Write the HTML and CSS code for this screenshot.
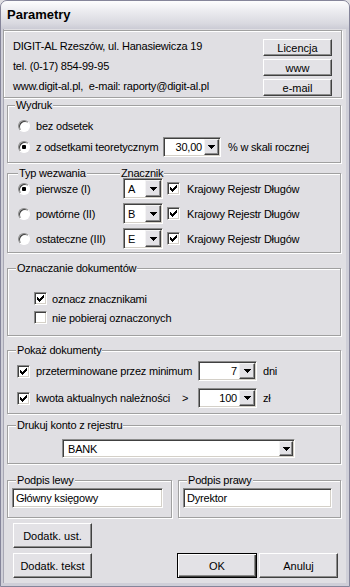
FILE: index.html
```html
<!DOCTYPE html>
<html lang="pl">
	<head>
		<meta charset="UTF-8" />
		<meta name="viewport" content="width=device-width, initial-scale=1.0" />
		<title>Parametry</title>
		<link rel="stylesheet" href="styles.css">
	</head>
	<body>
		<div class="window">
			<div class="titlebar">Parametry</div>
			<div class="client">
				<!-- company info + links -->
				<div class="info etched">
					<div class="info-text">
						<div>DIGIT-AL Rzeszów, ul. Hanasiewicza 19</div>
						<div>tel. (0-17) 854-99-95</div>
						<div>www.digit-al.pl,&nbsp; e-mail: raporty@digit-al.pl</div>
					</div>
					<div class="info-buttons">
						<button class="btn">Licencja</button>
						<button class="btn">www</button>
						<button class="btn">e-mail</button>
					</div>
				</div>

				<div class="group etched wydruk">
					<div class="legend"><span>Wydruk</span></div>
					<div class="row">
						<span class="radio"></span>
						<span>bez odsetek</span>
					</div>
					<div class="row">
						<span class="radio checked"></span>
						<span class="label-odsetki">z odsetkami teoretycznym</span>
						<div class="combo combo-odsetki">
							<span class="combo-value num">30,00</span>
							<span class="combo-btn"><svg width="7" height="4" viewBox="0 0 7 4"><path d="M0 0H7V1H6V2H5V3H4V4H3V3H2V2H1V1H0Z" /></svg></span>
						</div>
						<span class="unit">% w skali rocznej</span>
					</div>
				</div>

				<div class="group etched typ">
					<div class="legend"><span>Typ wezwania</span><span>Znacznik</span></div>
					<div class="row">
						<span class="radio checked"></span>
						<span class="label-typ">pierwsze (I)</span>
						<div class="combo combo-znacznik">
							<span class="combo-value">A</span>
							<span class="combo-btn"><svg width="7" height="4" viewBox="0 0 7 4"><path d="M0 0H7V1H6V2H5V3H4V4H3V3H2V2H1V1H0Z" /></svg></span>
						</div>
						<span class="check checked"><svg width="7" height="7" viewBox="0 0 7 7"><path d="M0 2H1V3H2V4H3V3H4V2H5V1H6V0H7V3H6V4H5V5H4V6H3V7H2V6H1V5H0Z" /></svg></span>
						<span class="krd">Krajowy Rejestr Długów</span>
					</div>
					<div class="row">
						<span class="radio"></span>
						<span class="label-typ">powtórne (II)</span>
						<div class="combo combo-znacznik">
							<span class="combo-value">B</span>
							<span class="combo-btn"><svg width="7" height="4" viewBox="0 0 7 4"><path d="M0 0H7V1H6V2H5V3H4V4H3V3H2V2H1V1H0Z" /></svg></span>
						</div>
						<span class="check checked"><svg width="7" height="7" viewBox="0 0 7 7"><path d="M0 2H1V3H2V4H3V3H4V2H5V1H6V0H7V3H6V4H5V5H4V6H3V7H2V6H1V5H0Z" /></svg></span>
						<span class="krd">Krajowy Rejestr Długów</span>
					</div>
					<div class="row">
						<span class="radio"></span>
						<span class="label-typ">ostateczne (III)</span>
						<div class="combo combo-znacznik">
							<span class="combo-value">E</span>
							<span class="combo-btn"><svg width="7" height="4" viewBox="0 0 7 4"><path d="M0 0H7V1H6V2H5V3H4V4H3V3H2V2H1V1H0Z" /></svg></span>
						</div>
						<span class="check checked"><svg width="7" height="7" viewBox="0 0 7 7"><path d="M0 2H1V3H2V4H3V3H4V2H5V1H6V0H7V3H6V4H5V5H4V6H3V7H2V6H1V5H0Z" /></svg></span>
						<span class="krd">Krajowy Rejestr Długów</span>
					</div>
				</div>

				<div class="group etched oznacz">
					<div class="legend"><span>Oznaczanie dokumentów</span></div>
					<div class="row">
						<span class="check checked"><svg width="7" height="7" viewBox="0 0 7 7"><path d="M0 2H1V3H2V4H3V3H4V2H5V1H6V0H7V3H6V4H5V5H4V6H3V7H2V6H1V5H0Z" /></svg></span>
						<span>oznacz znacznikami</span>
					</div>
					<div class="row">
						<span class="check"></span>
						<span>nie pobieraj oznaczonych</span>
					</div>
				</div>

				<div class="group etched pokaz">
					<div class="legend"><span>Pokaż dokumenty</span></div>
					<div class="row">
						<span class="check checked"><svg width="7" height="7" viewBox="0 0 7 7"><path d="M0 2H1V3H2V4H3V3H4V2H5V1H6V0H7V3H6V4H5V5H4V6H3V7H2V6H1V5H0Z" /></svg></span>
						<span class="label-min">przeterminowane przez minimum</span>
						<div class="combo combo-pokaz">
							<span class="combo-value num">7</span>
							<span class="combo-btn"><svg width="7" height="4" viewBox="0 0 7 4"><path d="M0 0H7V1H6V2H5V3H4V4H3V3H2V2H1V1H0Z" /></svg></span>
						</div>
						<span class="unit">dni</span>
					</div>
					<div class="row">
						<span class="check checked"><svg width="7" height="7" viewBox="0 0 7 7"><path d="M0 2H1V3H2V4H3V3H4V2H5V1H6V0H7V3H6V4H5V5H4V6H3V7H2V6H1V5H0Z" /></svg></span>
						<span class="label-kwota">kwota aktualnych należności</span>
						<span class="gt">&gt;</span>
						<div class="combo combo-pokaz">
							<span class="combo-value num">100</span>
							<span class="combo-btn"><svg width="7" height="4" viewBox="0 0 7 4"><path d="M0 0H7V1H6V2H5V3H4V4H3V3H2V2H1V1H0Z" /></svg></span>
						</div>
						<span class="unit">zł</span>
					</div>
				</div>

				<div class="group etched drukuj">
					<div class="legend"><span>Drukuj konto z rejestru</span></div>
					<div class="combo combo-konto">
						<span class="combo-value">BANK</span>
						<span class="combo-btn"><svg width="7" height="4" viewBox="0 0 7 4"><path d="M0 0H7V1H6V2H5V3H4V4H3V3H2V2H1V1H0Z" /></svg></span>
					</div>
				</div>

				<div class="podpis-row">
					<div class="group etched podpis podpis-left">
						<div class="legend"><span>Podpis lewy</span></div>
						<div class="field">Główny księgowy</div>
					</div>
					<div class="group etched podpis podpis-right">
						<div class="legend"><span>Podpis prawy</span></div>
						<div class="field">Dyrektor</div>
					</div>
				</div>

				<div class="bottom">
					<div class="bottom-left">
						<button class="btn">Dodatk. ust.</button>
						<button class="btn">Dodatk. tekst</button>
					</div>
					<div class="bottom-right">
						<button class="btn default">OK</button>
						<button class="btn">Anuluj</button>
					</div>
				</div>
			</div>
		</div>
	</body>
</html>
```

FILE: styles.css
```css
body {
	margin: 0;
	background: #e0dfe3;
	font-family: "Liberation Sans", Arial, sans-serif;
	font-size: 11px;
	letter-spacing: -0.2px;
	color: #000;
}
.window {
	box-sizing: border-box;
	width: 350px;
	height: 587px;
	border: 1px solid #85859a;
	border-radius: 7px 7px 0 0;
	background: #cfcfd8;
	display: flex;
	flex-direction: column;
	overflow: hidden;
}
.titlebar {
	height: 28px;
	line-height: 28px;
	padding-left: 6px;
	font-size: 13px;
	font-weight: bold;
	letter-spacing: 0;
	background: linear-gradient(#fdfdfe, #ececf0 35%, #d9d9e0 80%, #cbcbd5);
}
.client {
	flex: 1;
	margin: 0 3px 3px 2px;
	background: #e0dfe3;
	box-shadow: inset 1px 0 #a8a8b4;
	white-space: nowrap;
}

/* etched frame like a windows group box */
.etched {
	border: 1px solid #a0a0a0;
	box-shadow: inset 1px 1px #fff, 1px 1px #fff;
}

.info {
	box-sizing: border-box;
	height: 68px;
	margin: 1px 4px 0 0;
	padding: 5px 9px 0;
	display: flex;
	justify-content: space-between;
}
.info-text div {
	line-height: 20px;
}
.info-buttons {
	display: flex;
	flex-direction: column;
	gap: 3px;
	margin-top: 3px;
}
.info-buttons .btn {
	width: 69px;
	height: 17px;
}

.btn {
	font: inherit;
	color: #000;
	background: #e3e2e6;
	border: 1px solid;
	border-color: #fff #404040 #404040 #fff;
	box-shadow: inset -1px -1px #8c8c8c;
	padding: 0;
}
.btn.default {
	border-color: #000;
	box-shadow: inset 1px 1px #fff, inset -1px -1px #404040, inset -2px -2px #8c8c8c;
}

.group {
	margin: 0 5px 0 4px;
}
.legend {
	display: flex;
	height: 13px;
	line-height: 13px;
	margin: -7px 0 0 8px;
}
.legend span {
	background: #e0dfe3;
	padding: 0 1px;
}
.row {
	display: flex;
	align-items: center;
}

.radio {
	flex: none;
	box-sizing: border-box;
	width: 12px;
	height: 12px;
	margin-right: 6px;
	border-radius: 50%;
	border: 1px solid;
	border-color: #8c8c8c #fff #fff #8c8c8c;
	box-shadow: inset 1px 1px #404040;
	background: #fff;
	display: flex;
	align-items: center;
	justify-content: center;
}
.radio.checked::after {
	content: "";
	width: 4px;
	height: 4px;
	border-radius: 1px;
	background: #000;
}

.check {
	flex: none;
	box-sizing: border-box;
	width: 13px;
	height: 13px;
	border: 1px solid;
	border-color: #8c8c8c #fff #fff #8c8c8c;
	box-shadow: inset 1px 1px #404040, inset -1px -1px #d4d0c8;
	background: #fff;
	display: flex;
	align-items: center;
	justify-content: center;
}
.check svg {
	fill: #000;
}

.combo {
	flex: none;
	box-sizing: border-box;
	display: flex;
	padding: 1px;
	border: 1px solid;
	border-color: #8c8c8c #fff #fff #8c8c8c;
	box-shadow: inset 1px 1px #404040, inset -1px -1px #d4d0c8;
	background: #fff;
}
.combo-value {
	flex: 1;
	display: flex;
	align-items: center;
	padding: 0 2px;
}
.combo-value.num {
	justify-content: flex-end;
}
.combo-btn {
	box-sizing: border-box;
	flex: none;
	width: 16px;
	display: flex;
	align-items: center;
	justify-content: center;
	background: #e3e2e6;
	border: 1px solid;
	border-color: #f4f4f4 #404040 #404040 #f4f4f4;
	box-shadow: inset -1px -1px #8c8c8c;
}
.combo-btn svg {
	fill: #000;
}

/* Wydruk */
.wydruk {
	margin-top: 7px;
	padding-bottom: 5px;
}
.wydruk .legend {
	margin-left: 7px;
}
.wydruk .row {
	height: 20px;
	padding-left: 10px;
	margin-top: 1px;
}
.wydruk .legend + .row {
	margin-top: 4px;
}
.label-odsetki {
	width: 127px;
	flex: none;
}
.combo-odsetki {
	width: 58px;
	height: 20px;
}
.combo-odsetki .combo-btn {
	width: 15px;
}
.unit {
	margin-left: 6px;
}
.wydruk .unit {
	margin-left: 7px;
}

/* Typ wezwania */
.typ {
	margin-top: 10px;
	padding-bottom: 3px;
}
.typ .legend {
	display: grid;
	grid-template-columns: 102px auto;
	margin: -7px 0 -2px 10px;
}
.typ .legend span {
	justify-self: start;
}
.typ .row {
	height: 21px;
	padding-left: 10px;
	margin-top: 4px;
}
.typ .legend + .row {
	margin-top: 0;
}
.label-typ {
	width: 87px;
	flex: none;
}
.combo-znacznik {
	width: 40px;
	height: 21px;
}
.combo-znacznik .combo-value {
	padding-left: 3px;
}
.typ .check {
	margin-left: 4px;
}
.krd {
	margin-left: 7px;
}

/* Oznaczanie dokumentow */
.oznacz {
	margin-top: 15px;
	padding-bottom: 8px;
}
.oznacz .row {
	height: 19px;
	padding-left: 26px;
}
.oznacz .legend + .row {
	margin-top: 14px;
}
.oznacz .check {
	margin-right: 5px;
}

/* Pokaz dokumenty */
.pokaz {
	margin-top: 14px;
	padding-bottom: 5px;
}
.pokaz .row {
	height: 20px;
	padding-left: 9px;
	margin-top: 7px;
}
.pokaz .legend + .row {
	margin-top: 4px;
}
.pokaz .check {
	margin-right: 6px;
}
.label-min {
	width: 162px;
	flex: none;
}
.label-kwota {
	width: 146px;
	flex: none;
}
.gt {
	width: 16px;
	flex: none;
}
.combo-pokaz {
	width: 59px;
	height: 20px;
}

/* Drukuj konto */
.drukuj {
	margin-top: 11px;
	padding-bottom: 5px;
}
.combo-konto {
	width: 233px;
	height: 19px;
	margin: 7px 0 0 54px;
}
.combo-konto .combo-value {
	padding-left: 4px;
}
.combo-konto .combo-btn {
	width: 14px;
}

/* Podpisy */
.podpis-row {
	display: flex;
	gap: 6px;
	margin: 16px 5px 0 4px;
}
.podpis-row .group {
	margin: 0;
	padding-bottom: 9px;
}
.podpis-left {
	box-sizing: border-box;
	width: 165px;
}
.podpis-right {
	flex: 1;
}
.field {
	box-sizing: border-box;
	height: 20px;
	margin: 1px 0 0 4px;
	padding: 0 3px;
	line-height: 18px;
	border: 1px solid;
	border-color: #8c8c8c #fff #fff #8c8c8c;
	box-shadow: inset 1px 1px #404040, inset -1px -1px #d4d0c8;
	background: #fff;
}
.podpis-left .field {
	width: 151px;
}
.podpis-right .field {
	width: 149px;
}

/* Buttons */
.bottom {
	display: flex;
	align-items: flex-end;
	margin: 5px 8px 0 10px;
}
.bottom-left {
	display: flex;
	flex-direction: column;
	gap: 5px;
}
.bottom-left .btn {
	width: 79px;
	height: 25px;
}
.bottom-right {
	margin-left: auto;
	display: flex;
	gap: 2px;
}
.bottom-right .btn {
	width: 79px;
	height: 25px;
}
.bottom-right .default {
	width: 80px;
}
```
